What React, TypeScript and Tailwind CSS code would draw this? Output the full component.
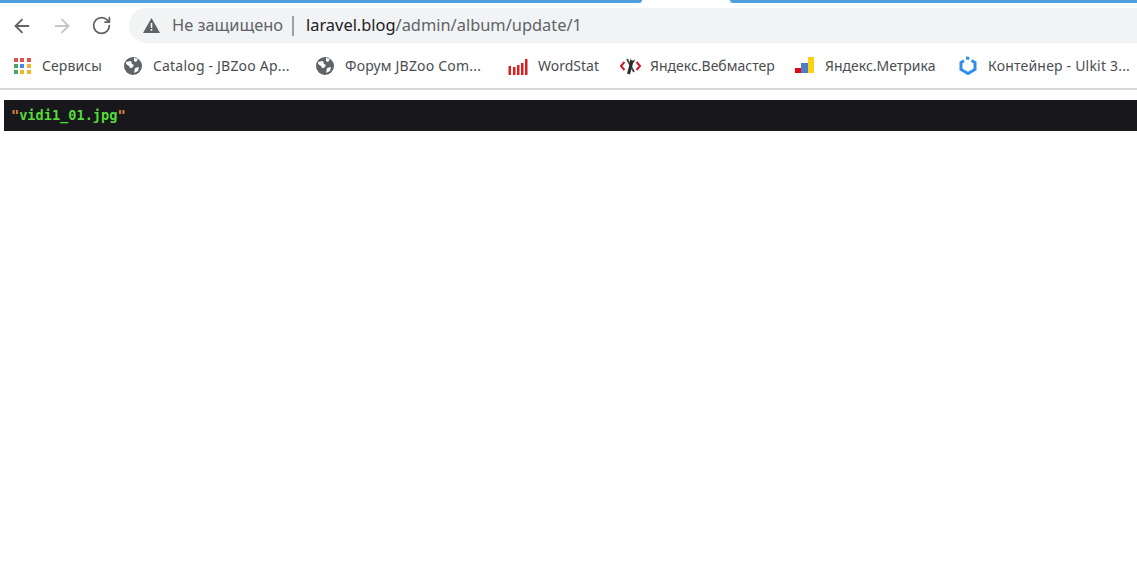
import { ArrowLeft, ArrowRight, RotateCw } from "lucide-react";
import type { ReactNode } from "react";

function Globe() {
  return (
    <svg width="20" height="20" viewBox="0 0 20 20" className="shrink-0">
      <circle cx="10" cy="10" r="9" fill="#5f6368" />
      <path d="M3 6 L8 5 L9 8 L11 9 L9 12 L7 12 L6 10 L3 8 Z" fill="#fff" />
      <path d="M11 2 L15 3 L13 6 L11 5 Z M12 12 L16 11 L15 15 L11 17 Z" fill="#fff" />
    </svg>
  );
}

function Apps() {
  const colors = ["#e0524a", "#e0524a", "#e0524a", "#4aa564", "#3f8ee0", "#f2b530", "#4aa564", "#f2b530", "#f2b530"];
  return (
    <div className="grid grid-cols-3 gap-[2px] shrink-0 w-[17px]">
      {colors.map((c, i) => (
        <span key={i} className="w-[4px] h-[4px]" style={{ background: c }} />
      ))}
    </div>
  );
}

function WordStatIcon() {
  return (
    <svg width="20" height="18" viewBox="0 0 20 18" className="shrink-0 mt-[3px]">
      <path d="M0.5 8h2.5v9H0.5zM5 9h2.5v8H5zM9 7h2.5v10H9zM13 5h2.5v12H13zM17 1h2.5v16H17z" fill="#dc1f1f" />
    </svg>
  );
}

function WebmasterIcon() {
  return (
    <svg width="21" height="20" viewBox="0 0 21 20" className="shrink-0">
      <path d="M4.5 6 L1 10 L4.5 14" fill="none" stroke="#c8202c" strokeWidth="2" />
      <path d="M16.5 6 L20 10 L16.5 14" fill="none" stroke="#c8202c" strokeWidth="2" />
      <path d="M7 3 L14 16" fill="none" stroke="#444" strokeWidth="1.8" />
      <path d="M12.2 4.5 L8.5 18" fill="none" stroke="#2b2b2b" strokeWidth="3" />
      <path d="M10.5 1.5 L11 4.5 L13 5 L14.5 3 L14.5 5.5 L12 7.5 L10 6 Z" fill="#2b2b2b" />
    </svg>
  );
}

function MetrikaIcon() {
  return (
    <svg width="20" height="17" viewBox="0 0 20 17" className="shrink-0">
      <path d="M0 11h7v5H0z" fill="#e30613" />
      <path d="M6 6h7v10H6z" fill="#4a7fc8" />
      <path d="M13 0h6v16h-6z" fill="#fcd116" />
    </svg>
  );
}

function UikitIcon() {
  return (
    <svg width="20" height="20" viewBox="0 0 20 20" className="shrink-0">
      <path d="M13.5 4.5 L17 6.5 V13.5 L10 17.5 L3 13.5 V6.5 L6 4.8" fill="none" stroke="#2f8eed" strokeWidth="3" />
      <path d="M8 0.5 L11.5 1 L11 4 L8 3.5 Z" fill="#2f8eed" />
    </svg>
  );
}

function Bookmark({ icon, label, className }: { icon: ReactNode; label: string; className: string }) {
  return (
    <div className={"flex items-center shrink-0 " + className}>
      {icon}
      <span className="whitespace-nowrap text-[14px] text-[#4a4d51]">{label}</span>
    </div>
  );
}

export default function App() {
  return (
    <div className="min-h-[578px] w-[1137px] overflow-hidden bg-white font-['Noto_Sans','Open_Sans',sans-serif]">
      <div className="flex h-[3px]">
        <div className="w-[642px] rounded-br-[6px] bg-[#4d9fdd]" />
        <div className="w-[88px]" />
        <div className="flex-1 rounded-bl-[6px] bg-[#4d9fdd]" />
      </div>

      <div className="flex h-[40px] items-end">
        <div className="flex h-[35px] w-[129px] items-center pl-[11px] text-[#5f6368]">
          <ArrowLeft size={22} strokeWidth={2} />
          <ArrowRight size={22} strokeWidth={2} className="ml-[18px] text-[#c4c6c9]" />
          <RotateCw size={21} strokeWidth={2} className="ml-[18px]" />
        </div>
        <div className="flex h-[35px] flex-1 items-center rounded-l-[18px] bg-[#f1f3f4] pl-[14px]">
          <svg width="17" height="15" viewBox="0 0 17 15" className="shrink-0">
            <path d="M8.5 0 L17 15 H0 Z" fill="#5f6368" />
            <path d="M7.7 5h1.6v5H7.7zM7.7 11h1.6v1.8H7.7z" fill="#fff" />
          </svg>
          <span className="ml-[12px] whitespace-nowrap text-[16.4px] text-[#5f6368]">Не защищено</span>
          <span className="ml-[9px] h-[20px] w-[2px] bg-[#9aa0a6]" />
          <span className="ml-[12px] whitespace-nowrap text-[16.4px] text-[#202124]">
            laravel.blog<span className="text-[#5f6368]">/admin/album/update/1</span>
          </span>
        </div>
      </div>

      <div className="flex h-[45px] items-center pl-[14px]">
        <Bookmark icon={<Apps />} label="Сервисы" className="w-[109px] gap-[11px] tracking-[0.1px]" />
        <Bookmark icon={<Globe />} label="Catalog - JBZoo Ap..." className="w-[192px] gap-[10px] tracking-[0.2px]" />
        <Bookmark icon={<Globe />} label="Форум JBZoo Com..." className="w-[193px] gap-[10px] tracking-[0.2px]" />
        <Bookmark icon={<WordStatIcon />} label="WordStat" className="w-[112px] gap-[10px]" />
        <Bookmark icon={<WebmasterIcon />} label="Яндекс.Вебмастер" className="w-[175px] gap-[9px]" />
        <Bookmark icon={<MetrikaIcon />} label="Яндекс.Метрика" className="w-[163px] gap-[10px]" />
        <Bookmark icon={<UikitIcon />} label="Контейнер - Ulkit 3..." className="gap-[10px] tracking-[0.2px]" />
      </div>
      <div className="h-[2px] bg-[#d9d9d9]" />

      <div className="ml-[4px] mt-[10px] flex h-[31px] items-center bg-[#18171b] pl-[7px] font-['DejaVu_Sans_Mono',monospace] text-[13.6px] font-bold leading-none">
        <span className="text-[#e08a3c]">"</span>
        <span className="text-[#56db3a]">vidi1_01.jpg</span>
        <span className="text-[#e08a3c]">"</span>
      </div>
    </div>
  );
}
